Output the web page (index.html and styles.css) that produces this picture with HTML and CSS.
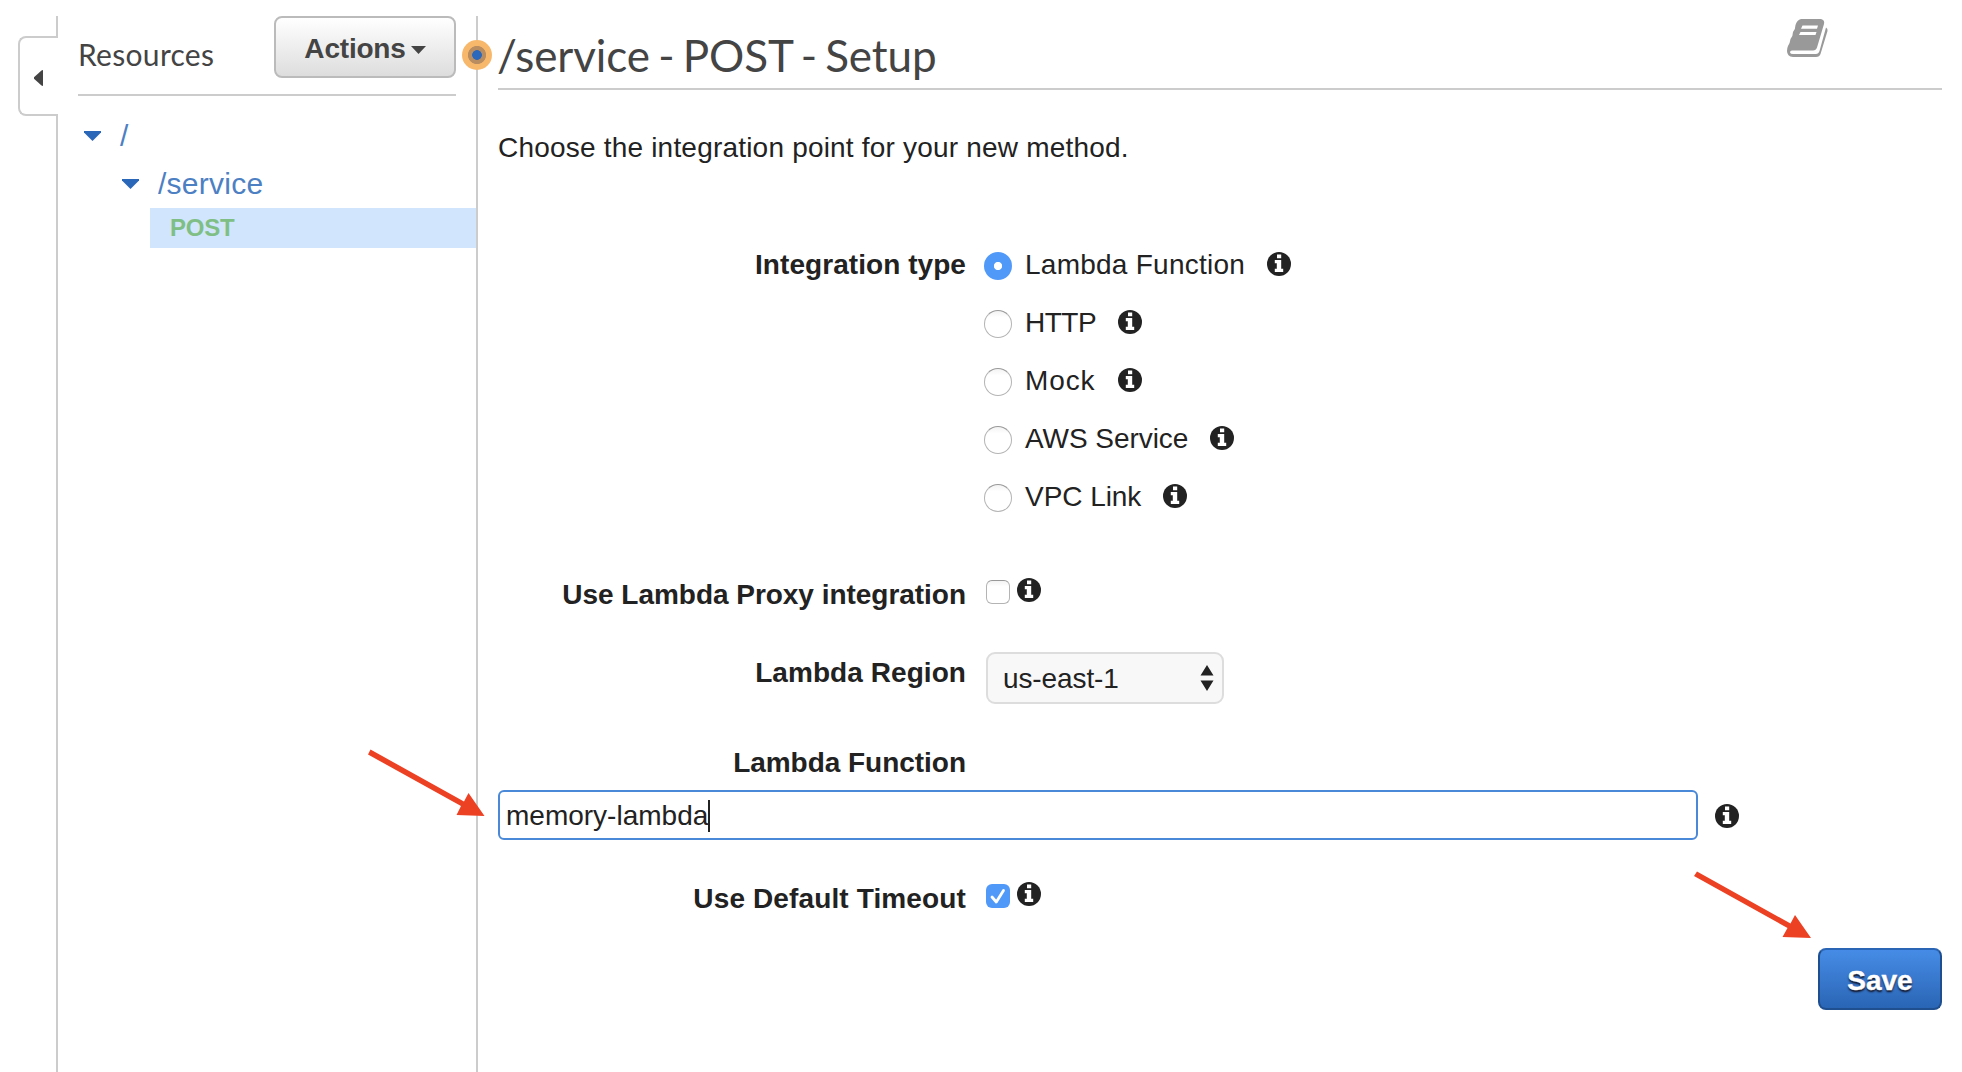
FILE: index.html
```html
<!DOCTYPE html>
<html lang="en">
<head>
<meta charset="utf-8">
<title>API Gateway - Method Setup</title>
<link rel="stylesheet" href="styles.css">
</head>
<body>
<svg class="defs" width="0" height="0" aria-hidden="true">
  <symbol id="info" viewBox="0 0 24 24">
    <circle cx="12" cy="12" r="12" fill="#222"/>
    <path d="M10 2.500h4.200v3.700H10zM7.800 8h6.400v8.700h2v3.300H7.800v-3.300h2V11.300h-2z" fill="#fff"/>
  </symbol>
</svg>
<div class="app">
  <div class="rail">
    <div class="rail-top"></div>
    <button class="rail-tab" aria-label="Collapse"><svg width="9" height="16" viewBox="0 0 9 16"><path d="M9 0v16L7.500 15.500 0 8.800V7.200L7.500.500z" fill="#444"/></svg></button>
    <div class="rail-rest"></div>
  </div>
  <aside class="sidebar">
    <div class="side-head">
      <span class="side-title">Resources</span>
      <button class="actions"><span>Actions</span><svg width="15" height="8" viewBox="0 0 15 8"><path d="M0 0h15L7.500 8z" fill="#444"/></svg></button>
    </div>
    <div class="node root"><svg width="17" height="10" viewBox="0 0 17 10"><path d="M0 0h17v1.500L8.500 10 0 1.500z" fill="#2a67b8"/></svg><span>/</span></div>
    <div class="node child"><svg width="17" height="10" viewBox="0 0 17 10"><path d="M0 0h17v1.500L8.500 10 0 1.500z" fill="#2a67b8"/></svg><span>/service</span></div>
    <div class="method">POST</div>
    <span class="drag-dot"></span>
  </aside>
  <main class="main">
    <header class="head">
      <h1>/service - POST - Setup</h1>
      <svg class="book" width="41" height="38" viewBox="0 0 41 38">
        <path d="M14 0H34Q38 1 37 5L30 28.500Q29 31.500 26 31.500H5Q3 31.500 3 33.500Q3.500 35 6 35H29Q31.500 35 32.500 32L39 8.500Q41 9.500 40.500 12L33.500 35Q32.500 38 29 38H6Q0 37.500 0 32Q0 29 1 27Q3 24 3.500 20Q6 17 6 13Q8.500 10 8.500 6Q10 1 14 0z" fill="#999"/>
        <path d="M15.500 6.500H31L30 9.700H14zM13.500 13H29.500L28.500 16H12z" fill="#fff"/>
      </svg>
    </header>
    <p class="intro">Choose the integration point for your new method.</p>
    <form class="form">
      <div class="row types">
        <span class="label tall">Integration type</span>
        <div class="options">
          <div class="option"><i class="radio on"></i><span>Lambda Function</span><svg class="info"><use href="#info"/></svg></div>
          <div class="option tight"><i class="radio"></i><span>HTTP</span><svg class="info"><use href="#info"/></svg></div>
          <div class="option wide"><i class="radio"></i><span>Mock</span><svg class="info"><use href="#info"/></svg></div>
          <div class="option normal"><i class="radio"></i><span>AWS Service</span><svg class="info"><use href="#info"/></svg></div>
          <div class="option normal"><i class="radio"></i><span>VPC Link</span><svg class="info"><use href="#info"/></svg></div>
        </div>
      </div>
      <div class="row proxy">
        <span class="label long">Use Lambda Proxy integration</span>
        <i class="check"></i><svg class="info"><use href="#info"/></svg>
      </div>
      <div class="row region">
        <span class="label">Lambda Region</span>
        <div class="select"><span>us-east-1</span><svg width="14" height="26" viewBox="0 0 14 26"><path d="M7 0l6.500 10.500H.5zM.5 15.500h13L7 26z" fill="#222"/></svg></div>
      </div>
      <div class="row function"><span class="label long">Lambda Function</span></div>
      <div class="input-row">
        <div class="input"><span>memory-lambda</span><i class="caret"></i></div>
        <svg class="info"><use href="#info"/></svg>
      </div>
      <div class="row timeout">
        <span class="label">Use Default Timeout</span>
        <i class="check on"><svg width="24" height="24" viewBox="0 0 24 24"><path d="M6 13l4.300 5L17.500 6.500" fill="none" stroke="#fff" stroke-width="2.800" stroke-linecap="round" stroke-linejoin="round"/></svg></i><svg class="info"><use href="#info"/></svg>
      </div>
      <div class="footer"><button type="button" class="save">Save</button></div>
    </form>
  </main>
</div>
<svg class="annotations" width="1962" height="1072" viewBox="0 0 1962 1072" fill="#ed4124">
  <path d="M370.500 749.500L464 801.500 468.500 793 484.500 816 456.500 815 461 806 368 754.500z"/>
  <path d="M1697 871.500L1790.500 923.500 1795 915 1811 938 1782.500 937 1787.500 928 1694 876z"/>
</svg>
</body>
</html>
```
FILE: styles.css
```css
* { box-sizing: border-box; }
body {
  margin: 0;
  background: #fff;
  color: #222;
  font: 28px/34px "Liberation Sans", Arial, sans-serif;
  overflow: hidden;
}
.defs { position: absolute; }
svg { display: block; flex: none; }
button { font: inherit; margin: 0; }
.app { display: flex; height: 1072px; padding-right: 20px; }

.rail { width: 58px; display: flex; flex-direction: column; padding: 16px 0 0 18px; }
.rail-top { height: 20px; border-right: 2px solid #ccc; }
.rail-tab {
  height: 80px;
  padding: 4px 0 0 14px;
  background: #fff;
  border: 2px solid #ccc;
  border-right: 0;
  border-radius: 8px 0 0 8px;
  display: flex;
  align-items: center;
}
.rail-rest { flex: 1; border-right: 2px solid #ccc; }

.sidebar { position: relative; width: 420px; margin-top: 16px; padding-left: 20px; border-right: 2px solid #ccc; }
.side-head {
  height: 80px;
  width: 378px;
  display: flex;
  justify-content: space-between;
  border-bottom: 2px solid #ccc;
}
.side-title { font: 30px/77px Lato, sans-serif; color: #444; letter-spacing: .3px; }
.actions {
  width: 182px;
  height: 62px;
  display: flex;
  align-items: center;
  justify-content: center;
  gap: 5px;
  padding: 0;
  color: #444;
  font-weight: bold;
  letter-spacing: -.2px;
  border: 2px solid #bbb;
  border-radius: 8px;
  background: linear-gradient(#fff, #ddd);
}
.actions span { padding-top: 4px; }
.actions svg { margin-top: 6px; }
.node { display: flex; align-items: center; color: #4d80c3; font-size: 30px; gap: 19px; letter-spacing: .25px; }
.node span { padding-top: 2px; }
.node svg { margin-top: 1px; }
.root { height: 48px; margin-top: 15px; padding-left: 6px; }
.child { height: 48px; padding-left: 44px; }
.method {
  height: 40px;
  margin: 1px 0 0 72px;
  padding-left: 20px;
  background: #d1e6fc;
  color: #7fbf85;
  font: bold 24px/40px "Liberation Sans", Arial, sans-serif;
  letter-spacing: -.2px;
}
.drag-dot {
  position: absolute;
  right: -16px;
  top: 24px;
  width: 30px;
  height: 30px;
  border-radius: 50%;
  background: radial-gradient(circle, #2b67bb 4.500px, #b98d5f 5.200px, #b98d5f 8.700px, #f7b86c 9.400px);
}

.main { flex: 1; padding-left: 20px; }
.head { height: 90px; display: flex; justify-content: space-between; border-bottom: 2px solid #ccc; padding-top: 19px; }
h1 { margin: 1px 0 0 -1px; font: 44px/71px Lato, sans-serif; color: #444; white-space: nowrap; word-spacing: -3px; letter-spacing: -.08px; }
.book { margin-right: 114px; }
.intro { margin: 41px 0 70px; letter-spacing: .2px; }
.row { display: flex; gap: 20px; }
.label { width: 468px; text-align: right; font-weight: bold; letter-spacing: .06px; white-space: nowrap; padding-top: 1px; }
.tall { line-height: 58px; }
.long { letter-spacing: -.03px; }
.types { gap: 18px; height: 328px; }
.option { height: 58px; display: flex; align-items: center; letter-spacing: .25px; }
.option span { margin: 0 22px 0 13px; padding-top: 1px; }
.option.tight { letter-spacing: -.5px; }
.option.wide { letter-spacing: .9px; }
.option.normal { letter-spacing: -.05px; }
.radio {
  width: 28px;
  height: 28px;
  margin-top: 4px;
  border-radius: 50%;
  border: 1px solid #b4b4b4;
  border-top-color: #999;
  background: linear-gradient(#f3f3f3, #fff 25%);
}
.radio.on { border: 0; background: radial-gradient(circle, #fff 3.700px, #5199f8 4.500px); }
.info { width: 24px; height: 24px; }
.check {
  width: 24px;
  height: 24px;
  border: 1px solid #b4b4b4;
  border-top-color: #999;
  border-radius: 6px;
  background: linear-gradient(#f3f3f3, #fff 25%);
}
.check.on { border: 0; background: #5199f8; }
.proxy, .timeout { align-items: center; }
.proxy { height: 62px; }
.proxy .check { margin: -4px 0 0; }
.proxy .info { margin: -8px 0 0 -13px; }
.timeout .label { letter-spacing: .13px; padding-top: 0; }
.timeout .check { margin: -6px 0 0; }
.timeout .info { margin: -10px 0 0 -13px; }
.region { height: 94px; }
.region .label { line-height: 94px; }
.select {
  width: 238px;
  height: 52px;
  margin-top: 27px;
  padding: 0 8px 0 15px;
  display: flex;
  align-items: center;
  justify-content: space-between;
  border: 2px solid #ddd;
  border-radius: 9px;
  background: #f8f8f8;
  letter-spacing: -.1px;
}
.select span, .input span { padding-top: 2px; }
.function { height: 71px; padding-top: 26px; }
.input-row { display: flex; align-items: center; height: 50px; }
.input {
  width: 1200px;
  height: 50px;
  padding-left: 6px;
  display: flex;
  align-items: center;
  border: 2px solid #4a88d8;
  border-radius: 6px;
}
.caret { width: 2px; height: 32px; margin-top: 2px; background: #222; }
.input-row .info { margin: 2px 0 0 17px; }
.timeout { height: 58px; margin-top: 30px; }
.footer { display: flex; justify-content: flex-end; padding-top: 20px; }
.save {
  width: 124px;
  height: 62px;
  padding: 3px 0 0;
  color: #fff;
  font-weight: bold;
  -webkit-text-stroke: .4px #fff;
  text-shadow: 0 2px 2px #112;
  border: 2px solid #1f4f8f;
  border-top-color: #2a65b5;
  border-radius: 8px;
  background: linear-gradient(#468ce6, #2a65b5);
}
.annotations { position: absolute; left: 0; top: 0; pointer-events: none; }
```
